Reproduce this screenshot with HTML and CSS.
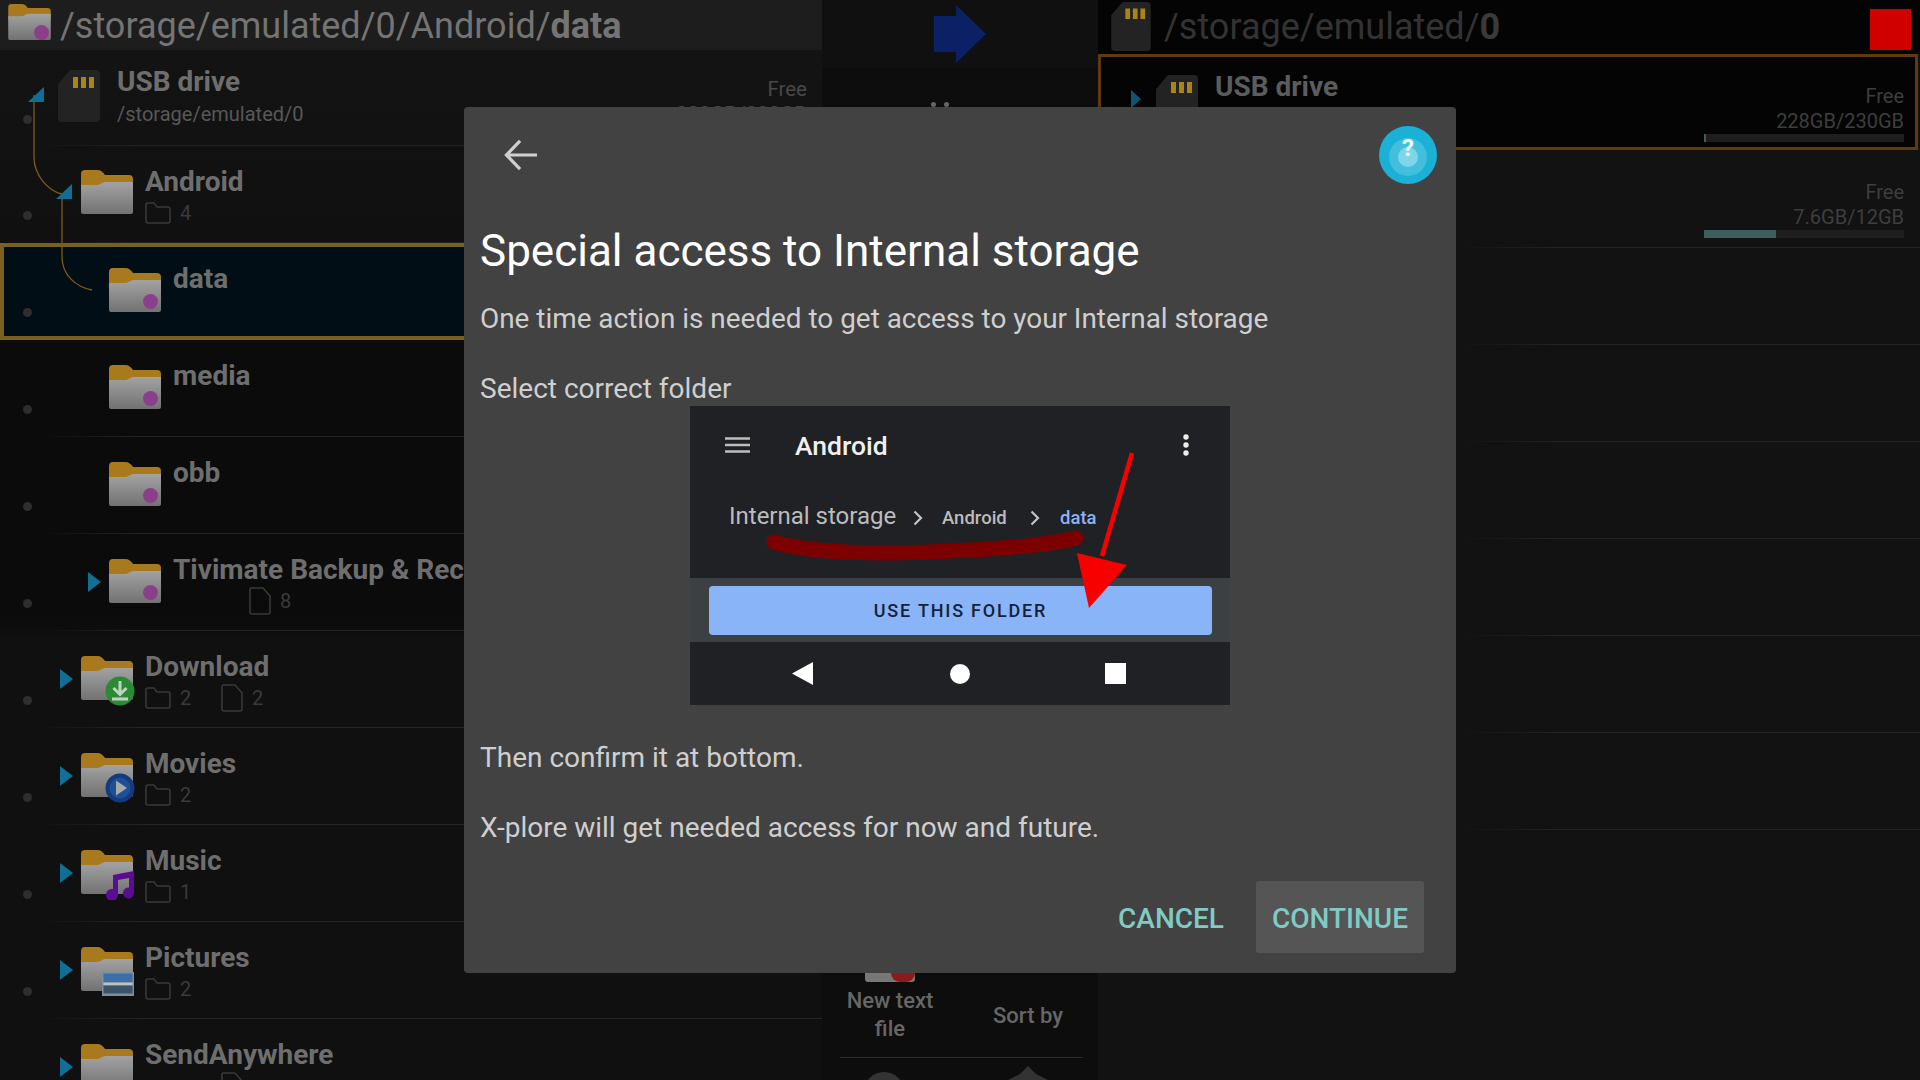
FILE: index.html
```html
<!DOCTYPE html>
<html lang="en">
<head>
<meta charset="utf-8">
<title>X-plore</title>
<link rel="stylesheet" href="styles.css">
</head>
<body>
<svg class="defs" width="0" height="0">
  <defs>
    <linearGradient id="fbody" x1="0" y1="0" x2="0" y2="1"><stop offset="0" stop-color="#a2a2a2"/><stop offset="1" stop-color="#727272"/></linearGradient>
    <symbol id="folder" viewBox="0 0 52 44">
      <path d="M0 4a4 4 0 0 1 4-4h12c4 0 6 2 8 5h24a4 4 0 0 1 4 4v10H0z" fill="#a87a1d"/>
      <path d="M0 15h16c4 0 5-3 9-3h27v30a2 2 0 0 1-2 2H2a2 2 0 0 1-2-2z" fill="url(#fbody)"/>
    </symbol>
    <symbol id="sd" viewBox="0 0 42 52">
      <path d="M12 0h26a4 4 0 0 1 4 4v44a4 4 0 0 1-4 4H4a4 4 0 0 1-4-4V14z" fill="#232323"/>
      <path d="M15 7h5v11h-5zM23 7h5v11h-5zM31 7h5v11h-5z" fill="#a88419"/>
    </symbol>
    <symbol id="sfolder" viewBox="0 0 26 22">
      <path d="M1 3a2 2 0 0 1 2-2h6l3 4h11a2 2 0 0 1 2 2v12a2 2 0 0 1-2 2H3a2 2 0 0 1-2-2z" fill="none" stroke="#383838" stroke-width="1.6"/>
    </symbol>
    <symbol id="sfile" viewBox="0 0 22 28">
      <path d="M2 1h12l7 8v16a2 2 0 0 1-2 2H3a2 2 0 0 1-2-2V2z" fill="none" stroke="#383838" stroke-width="1.6"/>
    </symbol>
  </defs>
</svg>

<div class="screen">
  <section class="pane pane-left">
    <header class="path path-left">
      <svg class="path-icon"><use href="#folder"/></svg>
      <span class="dotbadge path-badge"></span>
      <span>/storage/emulated/0/Android/<b>data</b></span>
    </header>
    <div class="row row-first">
      <i class="dot"></i><span class="twisty t0"></span>
      <svg class="sd"><use href="#sd"/></svg>
      <div class="info usb"><div class="name">USB drive</div><div class="sub">/storage/emulated/0</div></div>
      <div class="free free-left"><div>Free</div><div>228GB/230GB</div></div>
    </div>
    <div class="row">
      <i class="dot"></i><span class="twisty t1"></span>
      <svg class="folder"><use href="#folder"/></svg>
      <div class="info"><div class="name">Android</div><div class="stats"><span class="stat"><svg class="ic-folder"><use href="#sfolder"/></svg>4</span></div></div>
    </div>
    <div class="row selected">
      <i class="dot"></i><span class="twisty t2"></span>
      <span class="fwrap"><svg class="folder"><use href="#folder"/></svg><span class="dotbadge"></span></span>
      <div class="info"><div class="name">data</div></div>
    </div>
    <div class="row">
      <i class="dot"></i><span class="twisty t2"></span>
      <span class="fwrap"><svg class="folder"><use href="#folder"/></svg><span class="dotbadge"></span></span>
      <div class="info"><div class="name">media</div></div>
    </div>
    <div class="row">
      <i class="dot"></i><span class="twisty t2"></span>
      <span class="fwrap"><svg class="folder"><use href="#folder"/></svg><span class="dotbadge"></span></span>
      <div class="info"><div class="name">obb</div></div>
    </div>
    <div class="row">
      <i class="dot"></i><span class="twisty t2"><i class="tri"></i></span>
      <span class="fwrap"><svg class="folder"><use href="#folder"/></svg><span class="dotbadge"></span></span>
      <div class="info"><div class="name">Tivimate Backup &amp; Recovery</div><div class="stats"><span class="stat"></span><span class="stat"><svg class="ic-file"><use href="#sfile"/></svg>8</span></div></div>
    </div>
    <div class="row">
      <i class="dot"></i><span class="twisty t1"><i class="tri"></i></span>
      <span class="fwrap"><svg class="folder"><use href="#folder"/></svg>
        <svg class="badge" viewBox="0 0 30 30"><circle cx="15" cy="15" r="14.5" fill="#2a8a35"/><path d="M15 5v13M8.500 12l6.500 6.500 6.500-6.500M7 23h16" fill="none" stroke="#c4d2c4" stroke-width="3"/></svg></span>
      <div class="info"><div class="name">Download</div><div class="stats"><span class="stat"><svg class="ic-folder"><use href="#sfolder"/></svg>2</span><span class="stat"><svg class="ic-file"><use href="#sfile"/></svg>2</span></div></div>
    </div>
    <div class="row">
      <i class="dot"></i><span class="twisty t1"><i class="tri"></i></span>
      <span class="fwrap"><svg class="folder"><use href="#folder"/></svg>
        <svg class="badge" viewBox="0 0 30 30"><circle cx="15" cy="15" r="14.500" fill="#123a7c"/><circle cx="15" cy="15" r="10.500" fill="#1f4f94"/><path d="M11 7.500l11 7.500-11 7.500z" fill="#a9a9a9"/></svg></span>
      <div class="info"><div class="name">Movies</div><div class="stats"><span class="stat"><svg class="ic-folder"><use href="#sfolder"/></svg>2</span></div></div>
    </div>
    <div class="row">
      <i class="dot"></i><span class="twisty t1"><i class="tri"></i></span>
      <span class="fwrap"><svg class="folder"><use href="#folder"/></svg>
        <svg class="badge" viewBox="0 0 30 30"><path d="M8 5l21-4v22a5.500 5.500 0 1 1-5-5.500V8l-11 2v15a6 6 0 1 1-5-6z" fill="#5a0d92"/></svg></span>
      <div class="info"><div class="name">Music</div><div class="stats"><span class="stat"><svg class="ic-folder"><use href="#sfolder"/></svg>1</span></div></div>
    </div>
    <div class="row">
      <i class="dot"></i><span class="twisty t1"><i class="tri"></i></span>
      <span class="fwrap"><svg class="folder"><use href="#folder"/></svg>
        <svg class="badge badge-wide" viewBox="0 0 32 24"><rect width="32" height="24" fill="#7e8ea0"/><rect x="1.500" y="1.500" width="29" height="9" fill="#3a6fa8"/><rect x="1.500" y="10.500" width="29" height="3" fill="#c0c0c0"/><rect x="1.500" y="13.500" width="29" height="8" fill="#3c5468"/></svg></span>
      <div class="info"><div class="name">Pictures</div><div class="stats"><span class="stat"><svg class="ic-folder"><use href="#sfolder"/></svg>2</span></div></div>
    </div>
    <div class="row">
      <i class="dot"></i><span class="twisty t1"><i class="tri"></i></span>
      <span class="fwrap"><svg class="folder"><use href="#folder"/></svg></span>
      <div class="info"><div class="name">SendAnywhere</div><div class="stats"><span class="stat"></span><span class="stat"><svg class="ic-file"><use href="#sfile"/></svg></span></div></div>
    </div>
    <svg class="links" viewBox="0 0 120 300">
      <path d="M34 95v62c0 18 14 34 28 37M62 197v60c0 18 14 30 30 33" fill="none" stroke="#7a5c1c" stroke-width="1.300"/>
      <path d="M28 102l16-15v15zM56 199l16-15v15z" fill="#116f96"/>
    </svg>
  </section>

  <section class="pane pane-mid">
    <div class="mid-top">
      <svg class="go" viewBox="0 0 52 58"><path d="M0 11h22V0l30 29-30 29V47H0z" fill="#0c2066"/></svg>
    </div>
    <div class="peek-dots"><i></i><i></i></div>
    <div class="mid-fill"></div>
    <div class="tools">
      <div class="tool">
        <span class="tool-icon"><i class="tool-red"></i></span>
        <span>New text<br>file</span>
      </div>
      <div class="tool tool-sort">Sort by</div>
    </div>
    <div class="tool-rule"></div>
    <div class="tools-peek">
      <i class="peek-circle"></i>
      <svg class="peek-tri" viewBox="0 0 40 14"><path d="M20 0l8 8 12 6H0l12-6z" fill="#333"/></svg>
    </div>
  </section>

  <section class="pane pane-right">
    <header class="path path-right">
      <svg class="path-sd"><use href="#sd"/></svg>
      <span class="path-text">/storage/emulated/<b>0</b></span>
      <i class="stop"></i>
    </header>
    <div class="rrow rrow-selected">
      <span class="twisty-r"><i class="tri tri-small"></i></span>
      <svg class="sd-r"><use href="#sd"/></svg>
      <div class="rname">USB drive</div>
      <div class="free"><div>Free</div><div>228GB/230GB</div>
        <div class="bar"><span class="fill" style="width:1%"></span></div></div>
    </div>
    <div class="rrow rrow-tall">
      <div class="free"><div>Free</div><div>7.6GB/12GB</div>
        <div class="bar"><span class="fill" style="width:36%"></span></div></div>
    </div>
    <div class="rrow"></div>
    <div class="rrow"></div>
    <div class="rrow"></div>
    <div class="rrow"></div>
    <div class="rrow"></div>
    <div class="rrow"><i class="peek-blue"></i></div>
    <div class="rrow rrow-last"></div>
  </section>
</div>

<div class="scrim">
  <div class="dialog">
    <div class="dlg-head">
      <svg class="back" viewBox="0 0 36 34"><path d="M35 17H3M17 2L2.500 17 17 32" fill="none" stroke="#cfcfcf" stroke-width="3.400"/></svg>
      <span class="help"><span class="help-ring"><span class="help-core"></span></span><span class="help-q">?</span></span>
    </div>
    <h1 class="title">Special access to Internal storage</h1>
    <p class="text text-lead">One time action is needed to get access to your Internal storage</p>
    <p class="text gap before-shot">Select correct folder</p>
    <div class="shot">
      <div class="shot-top">
        <div class="shot-bar">
          <svg class="burger" viewBox="0 0 25 16"><path d="M0 1.500h25M0 8h25M0 14.500h25" stroke="#bdbdbd" stroke-width="2.400"/></svg>
          <span class="shot-title">Android</span>
          <svg class="kebab" viewBox="0 0 6 22"><circle cx="3" cy="3" r="2.700" fill="#eee"/><circle cx="3" cy="11" r="2.700" fill="#eee"/><circle cx="3" cy="19" r="2.700" fill="#eee"/></svg>
        </div>
        <div class="crumbs">
          <span class="crumb-big">Internal storage</span>
          <svg class="chev" viewBox="0 0 10 16"><path d="M1.500 1.500L8 8l-6.500 6.500" fill="none" stroke="#c4c4c4" stroke-width="2.200"/></svg>
          <span class="crumb">Android</span>
          <svg class="chev" viewBox="0 0 10 16"><path d="M1.500 1.500L8 8l-6.500 6.500" fill="none" stroke="#c4c4c4" stroke-width="2.200"/></svg>
          <span class="crumb crumb-on">data</span>
        </div>
      </div>
      <div class="shot-mid"><div class="use">USE THIS FOLDER</div></div>
      <div class="shot-nav">
        <svg class="nav-ic" viewBox="0 0 21 23"><path d="M21 0v23L0 11.500z" fill="#fff"/></svg>
        <i class="nav-circle"></i>
        <i class="nav-square"></i>
      </div>
      <svg class="marks" viewBox="0 0 540 299">
        <path d="M84 136Q130 150 240 146T386 132" fill="none" stroke="#7d0000" stroke-width="15" stroke-linecap="round"/>
        <path d="M442 47L412 150" stroke="#f80000" stroke-width="4.500"/>
        <path d="M387 147l50 12-38 43z" fill="#f80000"/>
      </svg>
    </div>
    <p class="text after-shot">Then confirm it at bottom.</p>
    <p class="text gap">X-plore will get needed access for now and future.</p>
    <div class="actions">
      <span class="btn">CANCEL</span>
      <span class="btn btn-focus">CONTINUE</span>
    </div>
  </div>
</div>
</body>
</html>
```
FILE: styles.css
```css
* { box-sizing: border-box; }
html, body { margin: 0; height: 100%; }
body { width: 1920px; height: 1080px; overflow: hidden; background: #0d0d0d; font-family: Roboto, "Liberation Sans", sans-serif; position: relative; }
.defs { position: absolute; }
i { display: block; }

.screen { display: flex; width: 1920px; height: 1080px; }
.pane { height: 1080px; overflow: hidden; flex: none; position: relative; }
.pane-left { width: 822px; background: linear-gradient(180deg, #141414 0, #101010 240px, #0b0b0b 340px, #0b0b0b 620px, #101010 640px); }
.pane-mid { width: 276px; background: #0d0d0d; display: flex; flex-direction: column; }
.pane-right { width: 822px; background: #121212; }

.path { display: flex; align-items: center; height: 50px; font-size: 36px; white-space: nowrap; }
.path b { font-weight: 700; }
.path-left { background: #1d1d1d; color: #747474; padding: 2px 0 0 8px; position: relative; gap: 9px; }
.path-icon { width: 43px; height: 36px; margin-top: -8px; }
.dotbadge { position: absolute; width: 15px; height: 15px; border-radius: 50%; background: #8b3f8b; right: 3px; bottom: 3px; }
.path-left .path-badge { left: 34px; right: auto; bottom: 10px; }

.row { display: flex; align-items: flex-start; height: 97px; position: relative; border-bottom: 1px solid; border-image: linear-gradient(90deg, transparent 40px, #242424 140px) 1; }
.row-first { height: 96px; }
.selected { background: #010e16; outline: 4px solid #7b5f20; outline-offset: -4px; border-bottom-color: transparent; border-image: none; }
.dot { flex: none; width: 9px; height: 9px; margin: 65px -1px 0 23px; border-radius: 50%; background: #2e2e2e; }
.twisty { flex: none; display: flex; justify-content: flex-end; padding: 38px 8px 0 0; }
.t0 { width: 27px; }
.t1 { width: 50px; }
.t2 { width: 78px; }
.tri { width: 0; height: 0; border-left: 13px solid #116f96; border-top: 10px solid transparent; border-bottom: 10px solid transparent; }
.sd { flex: none; width: 42px; height: 52px; margin: 20px 17px 0 0; }
.fwrap { flex: none; position: relative; width: 52px; height: 44px; margin-top: 25px; }
.folder { display: block; width: 52px; height: 44px; flex: none; }
.row > .folder { margin-top: 24px; }
.badge { position: absolute; width: 30px; height: 30px; right: -2px; bottom: -6px; }
.badge-wide { width: 32px; height: 24px; right: -1px; bottom: -5px; }

.info { margin-left: 12px; padding-top: 18px; white-space: nowrap; min-width: 0; }
.usb { margin-left: 0; padding-top: 14px; }
.name { font-size: 28px; line-height: 36px; font-weight: 700; color: #6e6e6e; }
.sub { font-size: 20px; line-height: 28px; color: #585858; }
.stats { display: flex; height: 24px; margin-top: 1px; }
.stat { display: flex; align-items: center; width: 76px; gap: 9px; font-size: 20px; color: #3a3a3a; }
.ic-folder { width: 26px; height: 22px; flex: none; }
.ic-file { width: 22px; height: 28px; flex: none; }

.free { margin-left: auto; width: 200px; flex: none; text-align: right; font-size: 20px; line-height: 25px; color: #3e3e3e; padding-top: 30px; }
.free-left { padding: 27px 15px 0 0; width: 300px; color: #484848; font-size: 20.500px; }
.links { position: absolute; left: 0; top: 0; width: 120px; height: 300px; }

.mid-top { height: 68px; background: #101010; display: flex; justify-content: center; padding-top: 5px; }
.go { width: 52px; height: 58px; }
.peek-dots { display: flex; gap: 8px; margin-top: 34px; padding-left: 109px; }
.peek-dots i { width: 5px; height: 5px; border-radius: 50%; background: #666; }
.mid-fill { flex: 1; }
.tools { display: flex; height: 84px; }
.tool { width: 136px; display: flex; flex-direction: column; align-items: center; text-align: center; font-size: 22px; line-height: 28px; color: #666; font-weight: 500; position: relative; }
.tool-icon { position: relative; width: 50px; height: 9px; background: #777; border-radius: 0 0 3px 3px; margin-bottom: 5px; }
.tool-red { position: absolute; right: 0; top: 0; width: 24px; height: 9px; background: #8b1a1a; border-radius: 0 0 12px 12px; }
.tool-sort { width: 140px; justify-content: flex-start; padding-top: 29px; }
.tool-rule { height: 1px; background: #2a2a2a; margin: 0 15px 0 18px; }
.tools-peek { display: flex; height: 22px; align-items: flex-start; padding: 14px 0 0 42px; gap: 104px; }
.peek-circle { width: 40px; height: 40px; border-radius: 50%; background: #333; }
.peek-tri { width: 40px; height: 14px; margin-top: -6px; }

.path-right { height: 54px; background: #040404; color: #333; padding-left: 13px; }
.path-right b { color: #3a3a3a; }
.path-sd { width: 40px; height: 49px; flex: none; margin-top: -2px; }
.path-text { margin-left: 13px; }
.stop { width: 41px; height: 41px; background: #d10000; margin-left: auto; margin-right: 9px; margin-top: 4px; }

.rrow { display: flex; align-items: flex-start; height: 97px; padding-right: 16px; border-bottom: 1px solid; position: relative; border-image: linear-gradient(90deg, transparent 360px, #232323 460px) 1; }
.rrow-selected { height: 96px; background: #040404; outline: 3px solid #5e3a0c; outline-offset: -3px; margin-right: 2px; padding-right: 14px; border: 0; }
.rrow-tall { height: 98px; }
.rrow-last { border: 0; }
.twisty-r { display: block; padding: 36px 0 0 33px; width: 58px; flex: none; }
.tri-small { border-left: 10px solid #0f5573; border-top-width: 9px; border-bottom-width: 9px; }
.sd-r { width: 42px; height: 52px; margin-top: 21px; flex: none; }
.rname { font-size: 28px; line-height: 36px; font-weight: 700; color: #5c5c5c; margin: 15px 0 0 17px; white-space: nowrap; }
.bar { height: 8px; background: #1e1e1e; }
.fill { display: block; height: 8px; background: #3d5e5c; }
.peek-blue { position: absolute; left: 72px; top: 0; margin-top: 24px; width: 30px; height: 30px; border-radius: 50%; background: #225d85; }

.scrim { position: absolute; inset: 0; display: flex; align-items: center; justify-content: center; }
.dialog { width: 992px; height: 866px; background: #424242; border-radius: 4px; padding: 19px 32px 20px 16px; display: flex; flex-direction: column; }
.dlg-head { display: flex; justify-content: space-between; height: 58px; margin-right: -13px; }
.back { width: 34px; height: 32px; margin: 13px 0 0 24px; }
.help { position: relative; width: 58px; height: 58px; border-radius: 50%; background: #1bb0d6; display: flex; align-items: center; justify-content: center; }
.help-ring { width: 38px; height: 38px; border-radius: 50%; background: #41bfdd; display: flex; align-items: center; justify-content: center; margin-top: 4px; }
.help-core { width: 20px; height: 20px; border-radius: 50%; background: #7fd6e8; }
.help-q { position: absolute; left: 0; right: 0; top: 8px; text-align: center; font-size: 24px; line-height: 28px; font-weight: 700; color: #f2fbfd; }
.title { margin: 41px 0 24px; font-size: 44px; line-height: 52px; font-weight: 400; color: #fff; white-space: nowrap; }
.text { margin: 0; font-size: 28px; line-height: 36px; color: #cfcfcf; white-space: nowrap; }
.text-lead { font-size: 27.900px; }
.gap { margin-top: 34px; }
.before-shot { margin-bottom: -1px; }
.after-shot { margin-top: 35px; }

.shot { position: relative; width: 540px; height: 299px; margin-left: 210px; background: #3c4043; display: flex; flex-direction: column; flex: none; }
.shot-top { height: 172px; background: #202124; }
.shot-bar { display: flex; align-items: center; height: 78px; padding-left: 35px; }
.burger { width: 25px; height: 16px; flex: none; }
.shot-title { font-size: 26.500px; font-weight: 500; color: #f0f0f0; margin-left: 45px; }
.kebab { width: 6px; height: 22px; margin-left: auto; margin-right: 41px; }
.crumbs { display: flex; align-items: center; height: 30px; margin-top: 19px; padding-left: 39px; color: #bcbcbc; }
.crumb-big { font-size: 24px; width: 167px; white-space: nowrap; margin-top: -4px; }
.chev { width: 10px; height: 16px; flex: none; margin: 0 0 0 17px; }
.crumb { font-size: 18.500px; font-weight: 500; margin-left: 19px; width: 71px; white-space: nowrap; }
.crumb-on { color: #8ab4f8; margin-left: 20px; }
.shot-mid { height: 64px; padding: 8px 18px 7px 19px; }
.use { height: 49px; line-height: 49px; background: #8ab4f8; border-radius: 4px; text-align: center; font-size: 18px; font-weight: 500; letter-spacing: 1.800px; color: #152238; }
.shot-nav { height: 63px; background: #202124; display: flex; align-items: center; padding-left: 102px; }
.nav-ic { width: 21px; height: 23px; flex: none; }
.nav-circle { width: 20px; height: 20px; border-radius: 50%; background: #fff; margin-left: 137px; }
.nav-square { width: 21px; height: 21px; background: #fff; margin-left: 135px; }
.marks { position: absolute; left: 0; top: 0; width: 540px; height: 299px; }

.actions { display: flex; justify-content: flex-end; align-items: center; gap: 32px; margin-top: 35px; height: 72px; }
.btn { font-size: 28px; height: 72px; line-height: 75px; color: #80cbc4; font-weight: 500; }
.btn-focus { width: 168px; text-align: center; background: #555; border-radius: 3px; }
```
